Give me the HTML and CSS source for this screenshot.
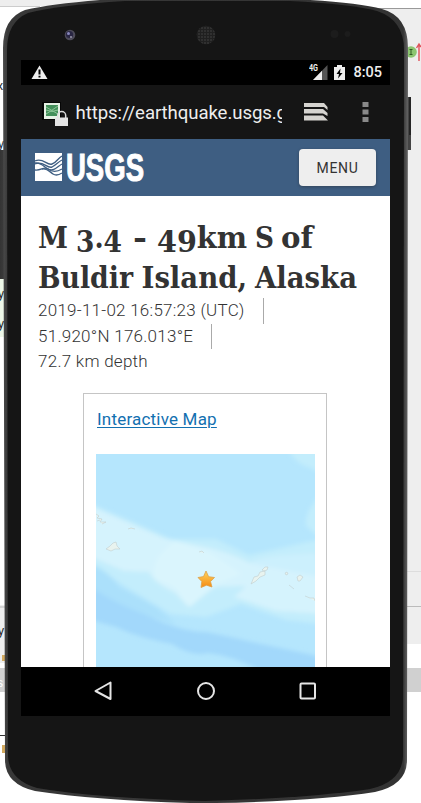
FILE: index.html
```html
<!DOCTYPE html>
<html lang="en">
<head>
<meta charset="utf-8">
<title>M 3.4 - 49km S of Buldir Island, Alaska</title>
<link rel="stylesheet" href="styles.css">
</head>
<body>
<div class="stage">
  <svg class="device" width="421" height="803" viewBox="0 0 421 803">
    <defs>
      <linearGradient id="rim" x1="0" x2="1" y1="0" y2="0">
        <stop offset="0" stop-color="#4b4b4b"/><stop offset=".012" stop-color="#383838"/>
        <stop offset=".988" stop-color="#333"/><stop offset="1" stop-color="#666"/>
      </linearGradient>
      <linearGradient id="key" x1="0" x2="1" y1="0" y2="0">
        <stop offset="0" stop-color="#343434"/><stop offset=".7" stop-color="#3d3d3d"/><stop offset="1" stop-color="#777"/>
      </linearGradient>
      <pattern id="mesh" width="3" height="3" patternUnits="userSpaceOnUse">
        <rect width="3" height="3" fill="#202020"/><circle cx="1" cy="1" r=".8" fill="#444"/>
      </pattern>
    </defs>
    <rect width="421" height="803" fill="#fff"/>
    <path d="M0 0H130V6H0Z" fill="#eee"/><path d="M0 6.5H40" stroke="#ccc"/>
    <path d="M355 8H421V644H400V20Z" fill="#eee"/>
    <path d="M370 8.5H421" stroke="#999"/>
    <path d="M407 571.5H421" stroke="#ddd"/><path d="M407 606.5H421" stroke="#bbb"/>
    <rect x="405" y="668" width="16" height="24" fill="#d0d0d0"/>
    <rect y="277" width="7" height="60" fill="#edf7e8"/>
    <rect y="605" width="7" height="58" fill="#eee"/><path d="M0 607H7" stroke="#bbb"/>
    <rect y="668" width="7" height="24" fill="#d0d0d0"/><path d="M0 735.5H7" stroke="#333"/>
    <g font-family="Liberation Sans" font-size="12" fill="#222">
      <text x="-3" y="90">x</text><text x="-2" y="148" fill="#234">y</text><text x="-2" y="298">y</text><text x="-2" y="328">y</text><text x="-2" y="635">y</text><text x="-3" y="687" fill="#fff">s</text>
    </g>
    <path d="M2 655h3v6h-3zM2 745h3v8h-3z" fill="#d3aa5f"/>
    <circle cx="411" cy="52" r="5.8" fill="#8cc571"/><path d="M409.5 49.5h3M411 49.5v5M409.5 54.5h3" stroke="#315a25" fill="none"/>
    <path d="M419 61V45M416.5 48L419 44L421 47" stroke="#e0525a" stroke-width="1.4" fill="none"/>
    <rect x="0" y="150" width="7" height="129" fill="url(#key)"/>
    <path d="M406 97h5v53h-5z" fill="#444"/><path d="M409 97h2v38h-2z" fill="#252525"/>
    <path d="M3 48Q3 18 25 10Q50 4 100 0H310Q360 3 382 9Q408 16 408 48L407 760Q407 785 375 792Q320 801 215 803H190Q95 800 35 791Q5 784 5 760Z" fill="url(#rim)"/>
    <path d="M7 50Q7 22 28 13Q60 5 125 1H290Q350 4 377 11Q404 20 404 50L403 756Q402 782 370 789Q310 798 205 801Q95 798 37 788Q9 780 8 756Z" fill="#151515"/>
    <circle cx="70" cy="35" r="5.3" fill="#4d4b59"/><circle cx="69.5" cy="34.5" r="3.6" fill="#292643"/><circle cx="68.5" cy="33.5" r="1.5" fill="#8887bb"/><circle cx="71" cy="37" r="1" fill="#9c9aae"/>
    <circle cx="206" cy="35" r="9.3" fill="url(#mesh)"/>
    <circle cx="334.500" cy="34" r="4" fill="#1c1c1c"/><circle cx="347.500" cy="34" r="3" fill="#1c1c1c"/>
  </svg>

  <main class="screen">
    <header class="status">
      <svg width="17" height="15" viewBox="0 0 17 15"><path d="M8.500 .5L16.500 14H.5Z" fill="#eee"/><path d="M8.500 4.500v5M8.500 10.800v1.800" stroke="#000" stroke-width="2"/></svg>
      <div class="status-right">
        <svg width="20" height="17" viewBox="0 0 20 17"><path d="M18.500 1V16H4Z" fill="#555"/><path d="M13 6.700V16H4Z" fill="#eee"/><text x="0" y="7" class="net" textLength="9" lengthAdjust="spacingAndGlyphs">4G</text></svg>
        <svg class="battery" width="11" height="17" viewBox="0 0 11 17"><path d="M3 1h5v2h3v13H0V3h3Z" fill="#eee"/><path d="M6.500 4.500L2.500 10h2.500l-1 4.500L8.500 9H6Z" fill="#000"/></svg>
        <span>8:05</span>
      </div>
    </header>

    <nav class="browser">
      <svg width="26" height="25" viewBox="0 0 26 25">
        <path d="M0 0H19V18H0Z" fill="#050505"/><path d="M2 1H18V17H2Z" fill="#e6f2e5"/><path d="M4 3H16V14H4Z" fill="#43905a"/><path d="M4 5L16 12M4 12Q9 9 16 4M4 8Q10 11 16 8" stroke="#8bc696" fill="none"/>
        <path d="M15.700 16v-2.500a4 4 0 0 1 8 0V16" fill="none" stroke="#ddd" stroke-width="1.500"/><path d="M13 15.500h13V24H13Z" fill="#e4e4e4"/>
      </svg>
      <span class="url">https://earthquake.usgs.gov</span>
      <svg class="tabs" width="25" height="20" viewBox="0 0 25 20"><path d="M0 1H20L23.500 5V8L20 5H0ZM0 7H19L23.500 11V14L19 11.500H0ZM0 13.500H19L24 18.500H0Z" fill="#d5d3cf"/></svg>
      <svg class="dots" width="7" height="21" viewBox="0 0 7 21"><path d="M.5 0h6v5h-6zM.5 7.500h6v5h-6zM.5 15h6v5h-6z" fill="#898989"/></svg>
    </nav>

    <section class="masthead">
      <svg width="110" height="31" viewBox="0 0 110 31">
        <path d="M0 1H27V29H0Z" fill="#fff"/>
        <g fill="none" stroke="#3e5e82" stroke-width="1.350">
          <path d="M0 9C8 5 12 14 17 12C21 11 23 6 27 4"/>
          <path d="M0 12C8 8 12 17 17 15C21 13 23 10 27 8"/>
          <path d="M0 11C6 10 10 16 13 17C19 20 23 14 27 12"/>
          <path d="M0 18C6 19 9 14 13 17C17 20 22 20 27 17"/>
          <path d="M7 17C12 16 15 20 18 22C21 24 24 23 27 21"/>
        </g>
        <text x="31" y="28.500" class="wordmark" textLength="78" lengthAdjust="spacingAndGlyphs">USGS</text>
      </svg>
      <button class="menu">MENU</button>
    </section>

    <article class="page">
      <h1>
        <svg width="330" height="82" viewBox="0 0 330 82">
          <text y="31.500" x="0" textLength="30" lengthAdjust="spacingAndGlyphs">M</text>
          <text y="31.500" x="38" dy="4 -4 4" textLength="46" lengthAdjust="spacingAndGlyphs">3.4</text>
          <text y="31.500" x="95" textLength="14" lengthAdjust="spacingAndGlyphs">-</text>
          <text y="31.500" x="119" dy="4 0 -4" textLength="90" lengthAdjust="spacingAndGlyphs">49km</text>
          <text y="31.500" x="217" textLength="19" lengthAdjust="spacingAndGlyphs">S</text>
          <text y="31.500" x="243" textLength="32" lengthAdjust="spacingAndGlyphs">of</text>
          <text y="71.500" x="0" textLength="95" lengthAdjust="spacingAndGlyphs">Buldir</text>
          <text y="71.500" x="103.500" textLength="105.500" lengthAdjust="spacingAndGlyphs">Island,</text>
          <text y="71.500" x="217" textLength="102" lengthAdjust="spacingAndGlyphs">Alaska</text>
        </svg>
      </h1>
      <ul class="facts">
        <li><span class="bar">2019-11-02 16:57:23 (UTC)</span></li>
        <li><span class="bar">51.920°N 176.013°E</span></li>
        <li><span>72.7 km depth</span></li>
      </ul>
      <section class="card">
        <a>Interactive Map</a>
        <svg class="map" width="219" height="214" viewBox="0 0 219 214">
          <defs><filter id="soft" x="-5%" y="-5%" width="110%" height="110%"><feGaussianBlur stdDeviation="2"/></filter>
          <linearGradient id="gold" x1="0" x2="0" y1="0" y2="1"><stop stop-color="#ffd45c"/><stop offset="1" stop-color="#f58a12"/></linearGradient></defs>
          <rect width="220" height="214" fill="#b5e6fd"/>
          <g filter="url(#soft)">
            <path d="M193-3Q201 11 215 14L225 20V-5ZM225 40Q208 58 210 72L225 85Z" fill="#c3edfc"/>
            <path d="M-5 50L35 67L75 85L120 85L153 101L225 85V170L190 166L145 150L110 163L75 160L30 133L-5 110Z" fill="#c3edfc"/>
            <path d="M-5 52Q35 70 68 84Q95 90 115 94Q140 101 152 108Q190 118 225 113V160L180 157L138 143L150 132L119 133L92 153L79 139Q58 129 53 118L28 117L-5 103Z" fill="#d5f3fd"/>
            <path d="M80 87Q53 103 59 126Q80 130 86 144L94 153L121 130L146 120L115 99Z" fill="#daf5fd"/>
            <path d="M-5 132Q25 145 40 155Q80 178 110 178Q140 184 160 189Q190 195 225 203V220H170Q140 202 112 199Q95 203 76 190Q40 183 20 173L-5 166Z" fill="#a2d8fb"/>
            <path d="M-5 110Q15 119 22 132L60 153L80 170Q30 157-5 133Z" fill="#abe0fb"/>
            <path d="M154 109Q160 101 220 99L225 123Z" fill="#ccf0fd"/>
          </g>
          <g fill="#e8f3ef" stroke="#bcc6c6" stroke-width=".5">
            <path d="M0 60l3 2-2 2 5 1-2 3 6 0-4 2M1 67l3-1M32 75l3-1 4 1M10 95l4-3 3-3 3-1 1 4 3 3-5 0-4 2zM103 98l3-1 2 2M155 130l3-7 4-1 2-4 5-1 0 4-5 2-4 4zM166 116l3-3 3 0-1 3-3 1zM189 119l2-1 1 2-2 1zM201 123l3-2 3 2-3 4-2 0zM193 131l5 4M209 142l5 2 4 0 1 3"/>
          </g>
          <path d="M110 117L112.600 122.700L118.500 123.500L114.500 127.600L116 133L110.500 131.200L105 133.500L105.800 127.500L102 123.500L107.500 122.600Z" fill="url(#gold)" stroke="#dca047" stroke-width=".8"/>
        </svg>
      </section>
    </article>

    <footer class="softkeys">
      <svg width="20" height="20" viewBox="0 0 20 20"><path d="M16.500 1.500V18L1.500 10Z"/></svg>
      <svg width="20" height="20" viewBox="0 0 20 20"><circle cx="10" cy="10" r="8"/></svg>
      <svg width="20" height="20" viewBox="0 0 20 20"><rect x="2.500" y="2.500" width="14.500" height="15" rx="1"/></svg>
    </footer>
  </main>
</div>
</body>
</html>
```
FILE: styles.css
```css
* { box-sizing: border-box; }
body { margin: 0; overflow: hidden; font-family: Roboto, sans-serif; }
svg { display: block; flex: none; }
.stage { position: relative; width: 421px; height: 803px; padding: 60px 31px 87px 21px; overflow: hidden; }
.device { position: absolute; left: 0; top: 0; }
.screen { position: relative; display: flex; flex-direction: column; width: 369px; height: 656px; overflow: hidden; }
.status { display: flex; justify-content: space-between; align-items: center; height: 25px; flex: none; padding: 0 8px 0 10px; background: #000; color: #eee; }
.status-right { display: flex; align-items: center; font-size: 14.500px; font-weight: 500; line-height: 20px; }
.net { font: bold 8.500px Roboto, sans-serif; fill: #eee; }
.battery { margin: 0 8px 0 5px; }
.browser { display: flex; align-items: center; height: 54px; flex: none; padding: 0 21px; background: #151515; color: #eee; }
.browser > svg:first-child { margin-top: 5px; }
.url { width: 206.500px; margin: 2px 0 0 7.500px; overflow: hidden; white-space: nowrap; font-size: 18.600px; letter-spacing: -.08px; }
.tabs { margin-left: 21.500px; }
.dots { margin-left: 33px; }
.masthead { display: flex; justify-content: space-between; height: 57px; flex: none; padding: 10px 14px 0 14px; background: #3e5e82; }
.masthead svg { margin-top: 3px; }
.wordmark { font: bold 38px "Liberation Sans", sans-serif; fill: #fff; stroke: #fff; stroke-width: 1px; }
.menu { width: 77px; height: 37px; padding: 0; border: 0; border-radius: 4px; background: #eee; color: #333; box-shadow: 0 1px 3px #2226; font: 14px Roboto, sans-serif; letter-spacing: .7px; }
.page { flex: 1; min-height: 0; overflow: hidden; padding: 20px 17px 0; background: #fff; color: #333; }
h1 { margin: 0; height: 82px; font: bold 30.500px "DejaVu Serif Condensed", "DejaVu Serif", serif; font-stretch: condensed; fill: #333; }
.facts { margin: 0; padding: 0; list-style: none; font-size: 17px; font-weight: 350; letter-spacing: .26px; line-height: 25.500px; }
.facts li { display: flex; height: 25.500px; }
.bar { padding-right: 18px; border-right: 1px solid #aaa; }
.card { width: 244px; height: 300px; margin: 18px 0 0 45px; padding: 11px 11px; border: 1px solid #c5c5c5; }
.card a { display: block; margin-left: 2px; color: #1270b0; font-size: 17px; letter-spacing: .2px; line-height: 28px; text-decoration: underline; text-decoration-thickness: 1px; text-underline-offset: 2px; }
.map { margin: 21px 0 0 1px; }
.softkeys { display: flex; justify-content: center; align-items: center; gap: 82px; height: 49px; flex: none; padding: 0 0 1px 0; background: #000; }
.softkeys svg { fill: none; stroke: #e5e5e5; stroke-width: 2; stroke-linejoin: round; }
```
